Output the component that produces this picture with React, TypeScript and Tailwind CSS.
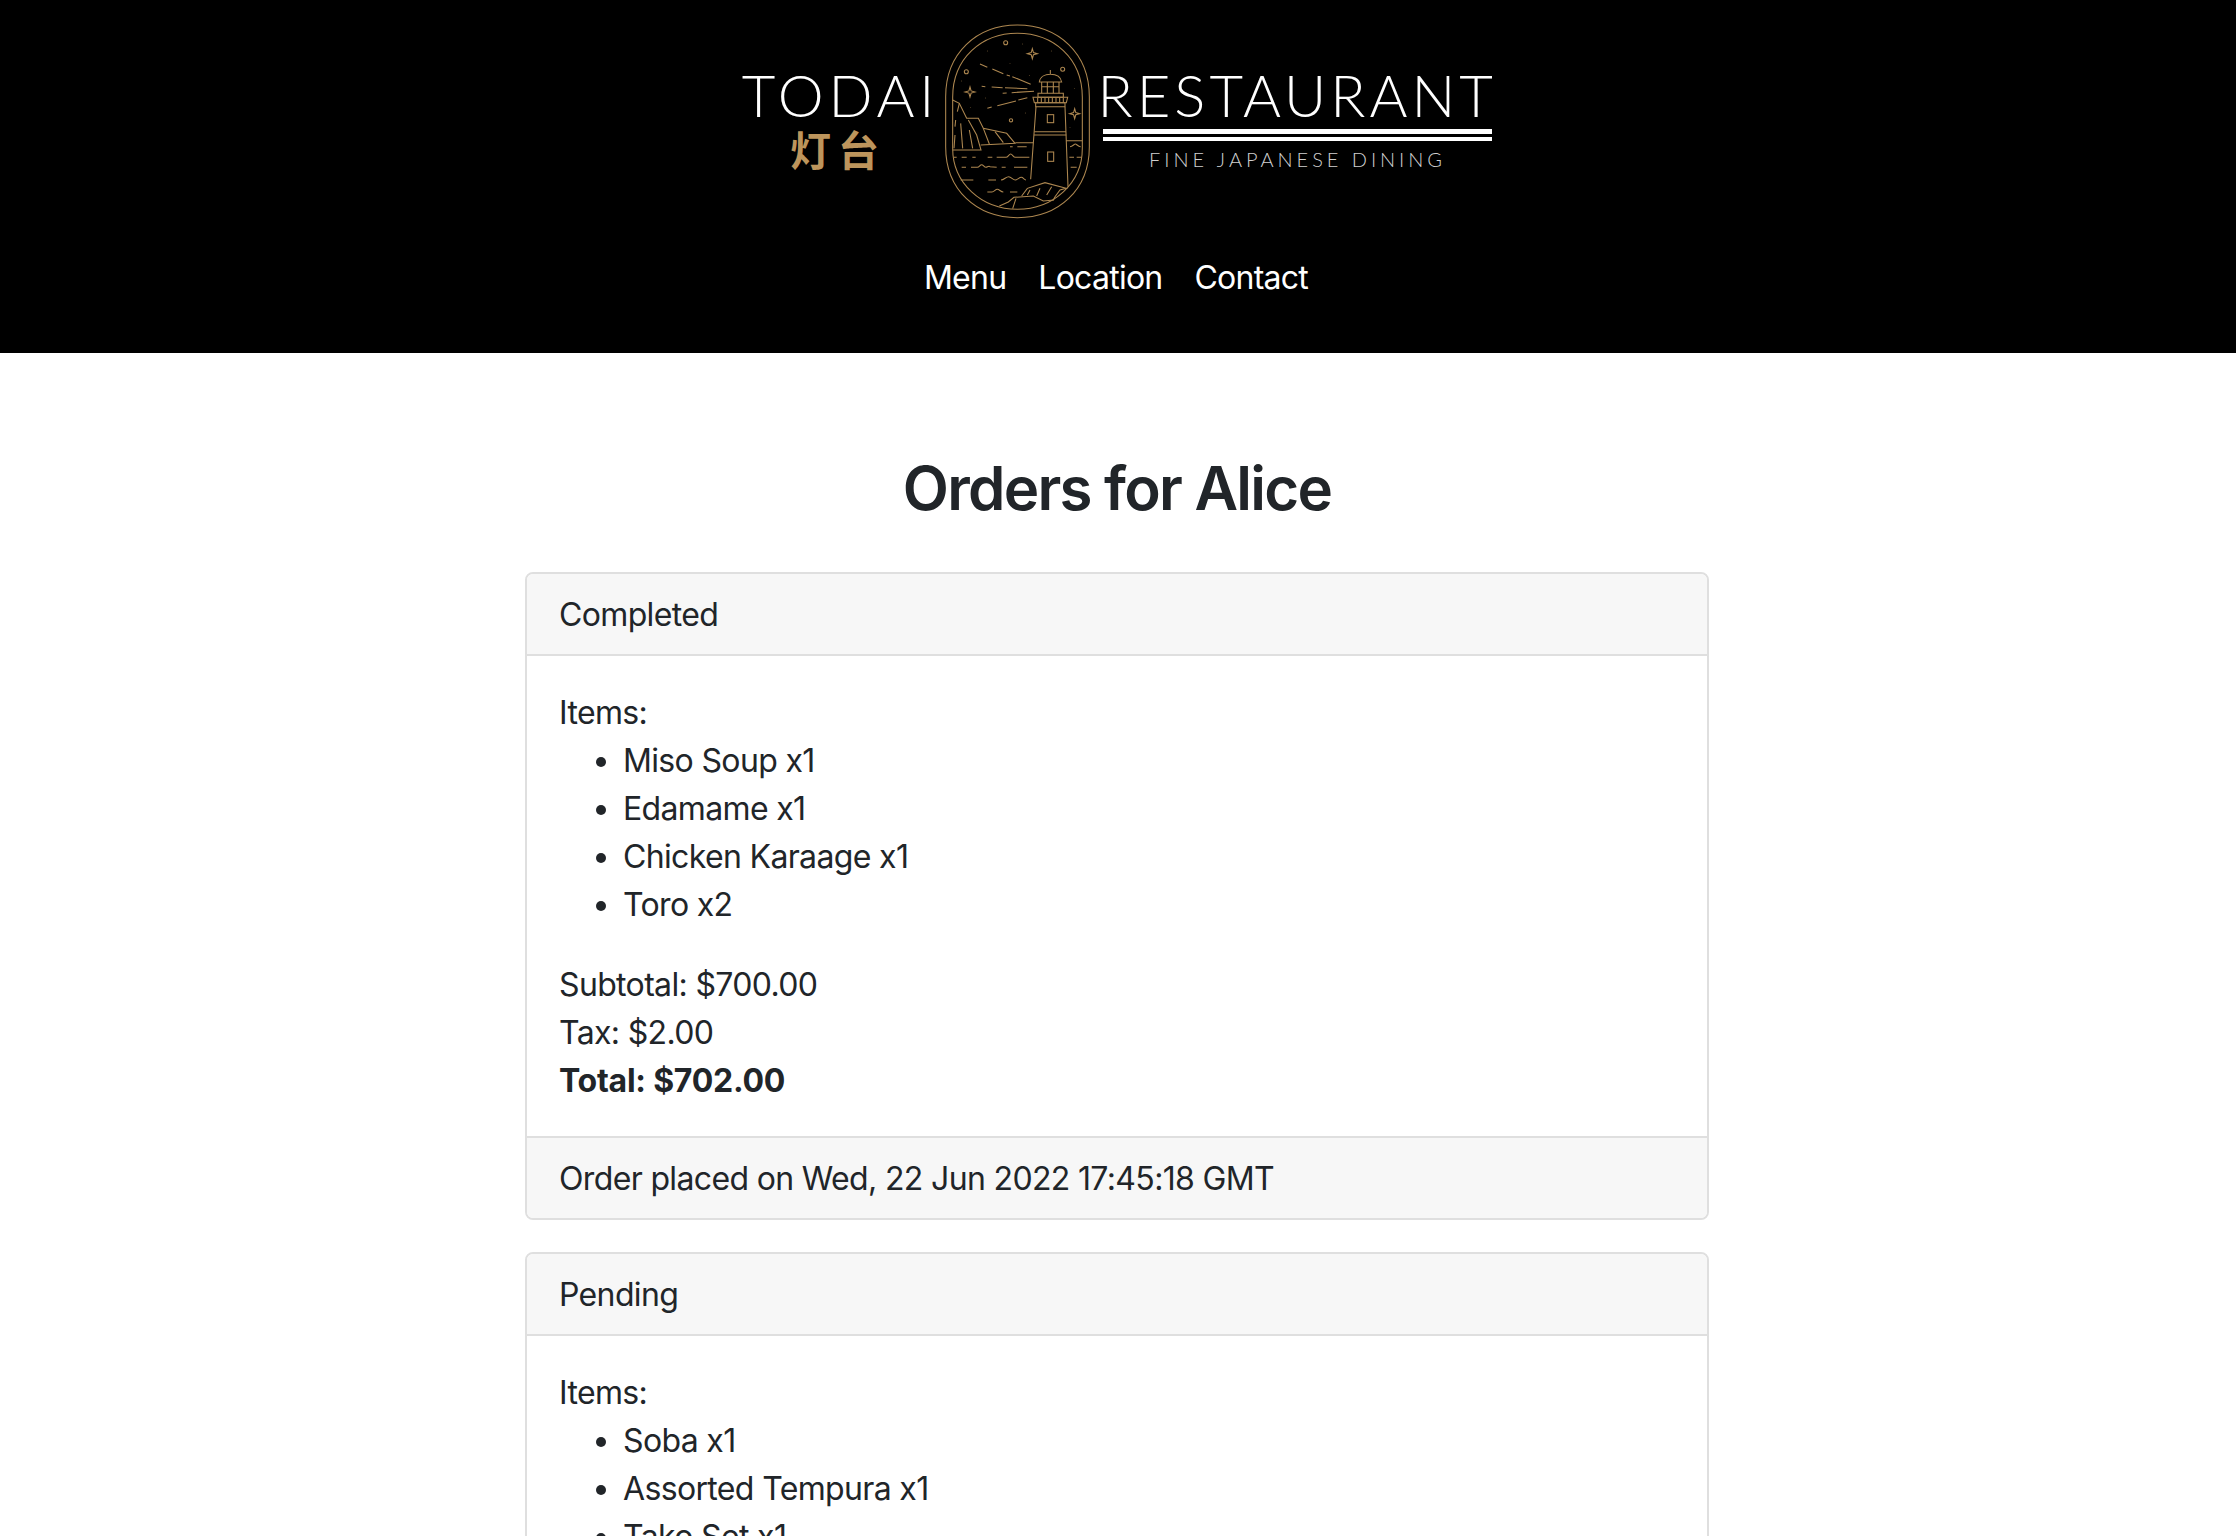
const GOLD = "#ad8750";

function Star({ x, y, r }: { x: number; y: number; r: number }) {
  const k = r * 0.22;
  return (
    <path
      d={`M${x} ${y - r}L${x + k} ${y - k}L${x + r} ${y}L${x + k} ${y + k}L${x} ${y + r}L${x - k} ${y + k}L${x - r} ${y}L${x - k} ${y - k}Z`}
    />
  );
}

function Lighthouse() {
  const dots = [
    [248, 72], [142, 93], [334, 93], [210, 130], [268, 167], [65, 183], [404, 205], [137, 234], [92, 262], [256, 279], [390, 322],
  ];
  const balusters = [293, 304, 315, 326, 337, 348, 359, 370];
  return (
    <svg viewBox="0 0 465 600" width="155" height="200" className="shrink-0" fill="none" stroke={GOLD} strokeWidth="3.2">
      <path d="M17 230C17 100 110 15 232 15C355 15 448 100 448 230L448 380C448 510 355 593 232 593C110 593 17 510 17 380Z" />
      <path d="M38 232C38 115 125 40 232 40C340 40 427 115 427 232L427 385C427 490 340 568 232 568C125 568 38 490 38 385Z" />
      <Star x={277} y={101} r={15} />
      <Star x={90} y={216} r={15} />
      <Star x={404} y={281} r={15} />
      <circle cx="197" cy="68" r="6" />
      <circle cx="79" cy="155" r="6" />
      <circle cx="368" cy="148" r="6" />
      <circle cx="213" cy="301" r="5" />
      {dots.map(([x, y]) => (
        <circle key={`${x}-${y}`} cx={x} cy={y} r="1.2" fill={GOLD} stroke="none" />
      ))}
      <path d="M120 132L142 142M157 147L190 161M200 165L210 168M217 170L272 193" />
      <path d="M125 199L136 200M155 201L188 203M195 203L262 206" />
      <path d="M188 220L200 219M215 218L282 214" />
      <path d="M142 265L155 261M172 257L228 243M235 240L262 233" />
      {/* lantern */}
      <path d="M331 150V163M298 186C300 170 315 163 331 163C347 163 362 170 365 186Z" />
      <path d="M305 186V220M357 186V220M322 186V220M340 186V220M305 200H357" />
      <path d="M294 220H370V232H294Z" />
      <path d="M279 232H383L379 248H283Z" />
      <path d={balusters.map((x) => `M${x} 234V248`).join("")} />
      <path d="M287 248H375V260H287Z" />
      {/* tower */}
      <path d="M288 260L272 478M375 260L384 500" />
      <path d="M283 335H378M282 345H379" />
      <rect x="322" y="284" width="19" height="24" />
      <rect x="323" y="396" width="18" height="28" />
      {/* cliffs */}
      <path d="M38 240L58 250L80 295L115 295L130 325L200 340L225 370L122 375" />
      <path d="M38 390H123L110 345L85 300" />
      <path d="M58 250L52 275M47 300L45 320M62 310L68 385M45 345L42 385M88 330L98 385M130 325L148 372M165 335L190 368" />
      {/* sea */}
      <path d="M210 380H218M232 380H260M226 368H280M378 362H427" />
      <path d="M390 380C398 380 402 372 406 372C410 372 414 380 422 380" />
      <path d="M42 412H50M65 412H80M97 412H107M143 412H157M170 412H198C204 412 207 402 212 402C217 402 220 412 226 412H268M388 412H402M410 412H424" />
      <path d="M65 442H78M93 442H112C118 442 120 434 125 434C130 434 132 442 138 442C142 442 146 436 150 440L170 442M185 442H197M222 442H262M392 442H410" />
      <path d="M62 480H100M145 480H168M183 480C192 480 198 470 206 470C214 470 218 480 226 480C232 480 238 472 244 472C250 472 252 480 258 480" />
      <path d="M142 516H156C162 516 166 508 172 508C178 508 182 516 190 516M210 516H232" />
      {/* rocks */}
      <path d="M245 528L262 505L315 488L378 505L360 510L345 530L340 540" />
      <path d="M178 558L205 546L222 532L280 528L310 543L342 540" />
      <path d="M228 535L218 566M300 505L290 528M335 500L320 525M270 510L262 525" />
    </svg>
  );
}

function Logo() {
  return (
    <div className="flex items-start h-[200px] gap-[8px] mr-[2px] font-['Lato','Liberation_Sans',sans-serif] tracking-normal">
      <div className="flex flex-col items-center w-[189px] pt-[46px]">
        <div className="text-[58px] leading-[58px] font-light text-white tracking-[4.8px] mr-[-7px] whitespace-nowrap">TODAI</div>
        <div className="mt-[4px] ml-[2px] text-[41px] leading-[40px] font-bold text-[#bd955c] tracking-[7px] font-['Noto_Sans_CJK_SC',sans-serif]">灯台</div>
      </div>
      <Lighthouse />
      <div className="flex flex-col w-[389px] pt-[46px]">
        <div className="text-[58px] leading-[58px] font-light text-white tracking-[4px] ml-[-5px] whitespace-nowrap">RESTAURANT</div>
        <div className="mt-[5px] h-[5px] bg-white" />
        <div className="mt-[3px] h-[4px] bg-white" />
        <div className="mt-[6px] ml-[1px] text-center text-[20px] leading-[24px] font-light text-[#d0d0d0] tracking-[3.95px] whitespace-nowrap">FINE JAPANESE DINING</div>
      </div>
    </div>
  );
}

function Card({ status, items, footer, subtotal, tax, total }: { status: string; items: string[]; footer: string; subtotal: string; tax: string; total: string }) {
  return (
    <div className="w-[1184px] shrink-0 rounded-lg border-2 border-[#dfdfdf] overflow-hidden">
      <div className="bg-[#f7f7f7] border-b-2 border-[#dfdfdf] px-8 pt-[17px] pb-[15px]">{status}</div>
      <div className="px-8 pt-[33px] pb-[31px]">
        <div>Items:</div>
        <ul className="pl-16 mb-8">
          {items.map((i) => (
            <li key={i} className="relative before:absolute before:left-[-27px] before:top-[20px] before:size-[10px] before:rounded-full before:bg-[#212529]">
              {i}
            </li>
          ))}
        </ul>
        <div>Subtotal: {subtotal}</div>
        <div>Tax: {tax}</div>
        <div className="font-bold tracking-[-0.25px]">Total: {total}</div>
      </div>
      <div className="bg-[#f7f7f7] border-t-2 border-[#dfdfdf] px-8 pt-[17px] pb-[15px]">{footer}</div>
    </div>
  );
}

export default function App() {
  return (
    <div className="h-screen overflow-hidden bg-white font-['Inter',sans-serif] text-[32px] leading-[48px] tracking-[-0.65px] text-[#212529]">
      <header className="bg-black flex flex-col items-center pt-5 pb-[51px]">
        <Logo />
        <nav className="mt-[34px] mr-[4px] flex gap-8 text-white tracking-[-0.75px]">
          <a>Menu</a>
          <a>Location</a>
          <a>Contact</a>
        </nav>
      </header>
      <main className="flex flex-col items-center pr-[2px]">
        <h1 className="mt-[97px] mb-[45px] text-[60px] leading-[77px] font-semibold tracking-[-1.75px]">Orders for Alice</h1>
        <div className="flex flex-col gap-8">
          <Card
            status="Completed"
            items={["Miso Soup x1", "Edamame x1", "Chicken Karaage x1", "Toro x2"]}
            subtotal="$700.00"
            tax="$2.00"
            total="$702.00"
            footer="Order placed on Wed, 22 Jun 2022 17:45:18 GMT"
          />
          <Card
            status="Pending"
            items={["Soba x1", "Assorted Tempura x1", "Tako Set x1"]}
            subtotal="$120.00"
            tax="$2.00"
            total="$122.00"
            footer="Order placed on Wed, 22 Jun 2022 17:50:02 GMT"
          />
        </div>
      </main>
    </div>
  );
}
